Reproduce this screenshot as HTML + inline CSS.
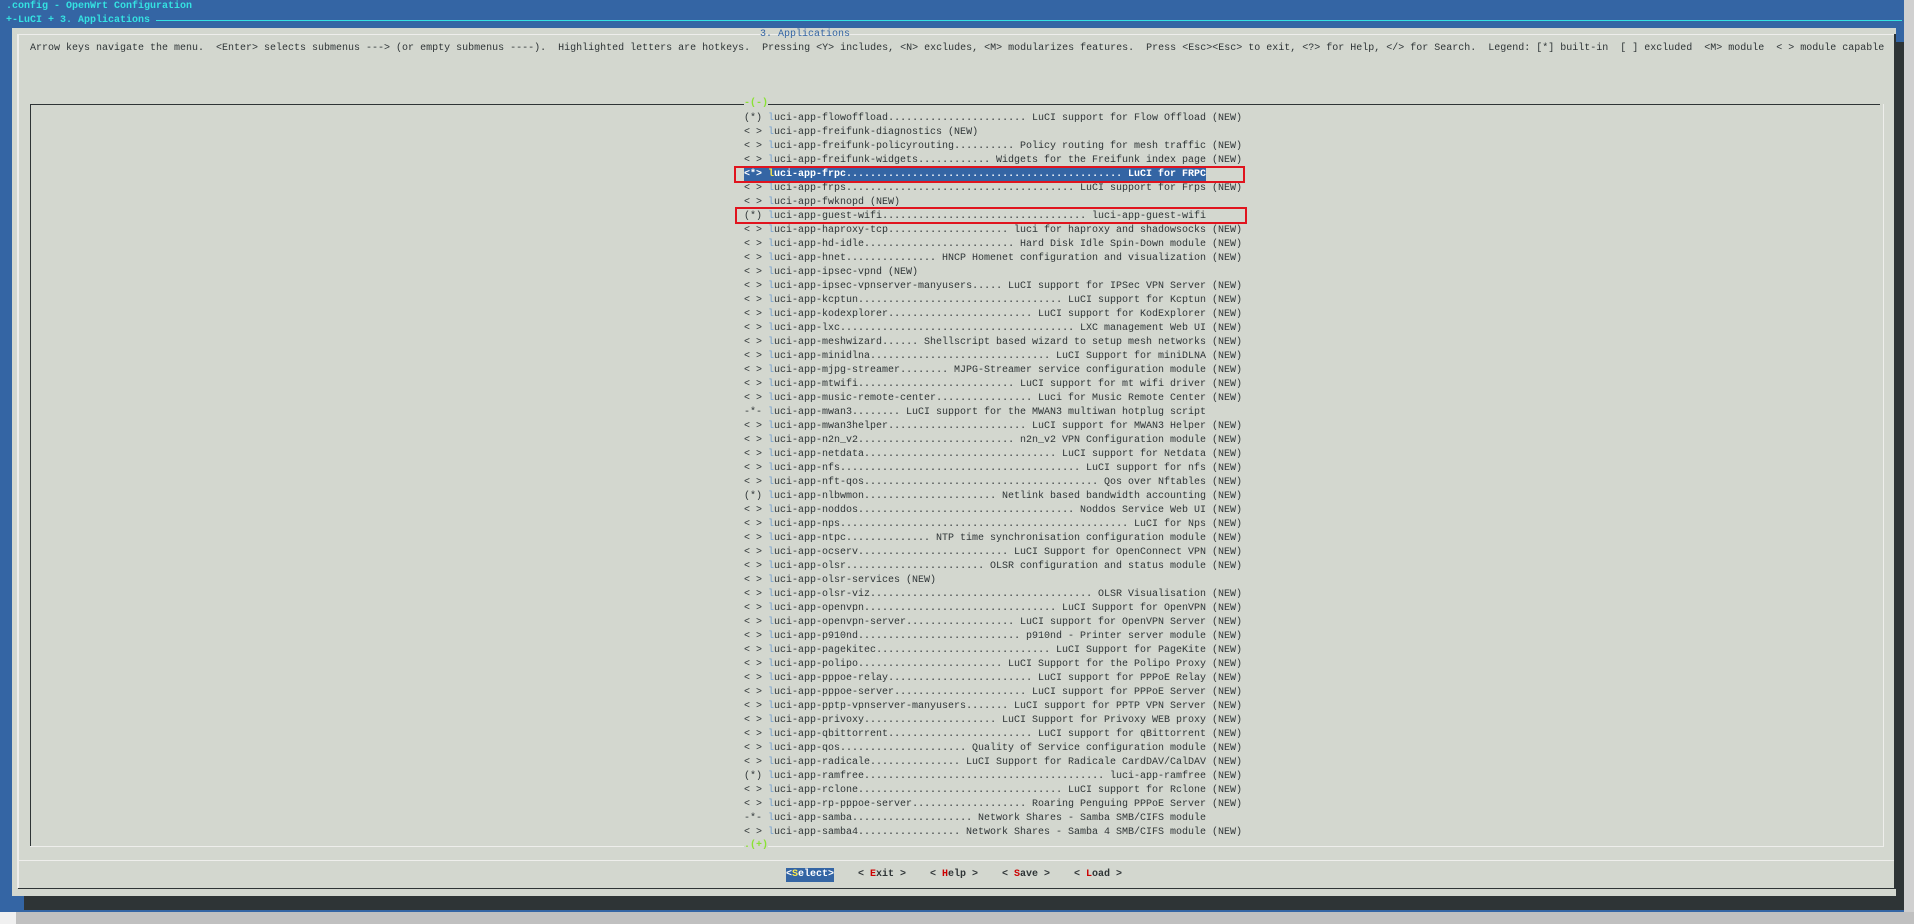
<!DOCTYPE html>
<html><head><meta charset="utf-8"><style>
*{margin:0;padding:0;box-sizing:border-box}
body{width:1914px;height:924px;overflow:hidden;background:#3465a4;position:relative;font-family:"Liberation Mono","Noto Sans CJK SC",monospace;font-size:10px;color:#2e3436}
.a{position:absolute;white-space:pre;line-height:14px}
.cy{color:#34e2e2;font-weight:bold}
#dlg{position:absolute;left:12px;top:28px;width:1884px;height:868px;background:#d3d7cf}
.hl{position:absolute;height:1px;background:#eeeeec}
.dk{position:absolute;background:#2e3436}
.row{position:absolute;left:744px;width:462px;height:14px;display:flex;white-space:pre;line-height:14px;overflow:hidden}
.row .d{flex:1;overflow:hidden}
.row .k{color:#729fcf}
.row.sel{background:#3465a4;color:#fff;font-weight:bold}
.row.sel .k{color:#fce94f}
.new{position:absolute;left:1206px;white-space:pre;line-height:14px}
.box{position:absolute;border:2px solid #e0141e}
.btn{position:absolute;top:868px;white-space:pre;line-height:14px;font-weight:bold}
.r{color:#cc0000}
</style></head><body>
<div class="a cy" style="left:6px;top:0">.config - OpenWrt Configuration</div>
<div class="a cy" style="left:6px;top:14px">+-LuCI + 3. Applications</div>
<div style="position:absolute;left:156px;top:20px;width:1746px;height:1px;background:#34e2e2"></div>
<div class="dk" style="left:1896px;top:42px;width:8px;height:868px"></div>
<div class="dk" style="left:24px;top:896px;width:1880px;height:14px"></div>
<div style="position:absolute;left:0;top:912px;width:1914px;height:12px;background:#c0c0c0"></div>
<div style="position:absolute;left:0;top:912px;width:16px;height:12px;background:#f0f0f0"></div>
<div style="position:absolute;left:1904px;top:0;width:10px;height:912px;background:#d0d0d0"></div>
<div id="dlg"></div>
<div class="hl" style="left:18px;top:34px;width:1878px"></div>
<div style="position:absolute;left:17px;top:34px;width:2px;height:854px;background:#eeeeec"></div>
<div class="dk" style="left:1894px;top:34px;width:2px;height:854px"></div>
<div class="a" style="left:760px;top:28px;color:#3465a4">3. Applications</div>
<div class="a" style="left:30px;top:42px">Arrow keys navigate the menu.  &lt;Enter&gt; selects submenus ---&gt; (or empty submenus ----).  Highlighted letters are hotkeys.  Pressing &lt;Y&gt; includes, &lt;N&gt; excludes, &lt;M&gt; modularizes features.  Press &lt;Esc&gt;&lt;Esc&gt; to exit, &lt;?&gt; for Help, &lt;/&gt; for Search.  Legend: [*] built-in  [ ] excluded  &lt;M&gt; module  &lt; &gt; module capable</div>
<div class="dk" style="left:30px;top:104px;width:1850px;height:1px"></div>
<div class="dk" style="left:30px;top:104px;width:1px;height:742px"></div>
<div class="hl" style="left:30px;top:846px;width:1854px"></div>
<div style="position:absolute;left:1883px;top:104px;width:1px;height:742px;background:#eeeeec"></div>
<div class="a" style="left:744px;top:97px;color:#8ae234;font-weight:bold;background:#d3d7cf">-(-)</div>
<div class="a" style="left:744px;top:839px;color:#8ae234;font-weight:bold;background:#d3d7cf">.(+)</div>
<div class="hl" style="left:18px;top:860px;width:1876px"></div>
<div class="dk" style="left:18px;top:888px;width:1878px;height:1px"></div>

<div class="row" style="top:112px"><span>(*) </span><span class="k">l</span><span>uci-app-flowoffload</span><span class="d">........................................................................</span><span> LuCI support for Flow Offload</span></div><div class="new" style="top:112px"> (NEW)</div>
<div class="row" style="top:126px"><span>&lt; &gt; </span><span class="k">l</span><span>uci-app-freifunk-diagnostics (NEW)</span></div>
<div class="row" style="top:140px"><span>&lt; &gt; </span><span class="k">l</span><span>uci-app-freifunk-policyrouting</span><span class="d">........................................................................</span><span> Policy routing for mesh traffic</span></div><div class="new" style="top:140px"> (NEW)</div>
<div class="row" style="top:154px"><span>&lt; &gt; </span><span class="k">l</span><span>uci-app-freifunk-widgets</span><span class="d">........................................................................</span><span> Widgets for the Freifunk index page</span></div><div class="new" style="top:154px"> (NEW)</div>
<div class="row sel" style="top:168px"><span>&lt;*&gt; </span><span class="k">l</span><span>uci-app-frpc</span><span class="d">........................................................................</span><span> LuCI for FRPC</span></div>
<div class="row" style="top:182px"><span>&lt; &gt; </span><span class="k">l</span><span>uci-app-frps</span><span class="d">........................................................................</span><span> LuCI support for Frps</span></div><div class="new" style="top:182px"> (NEW)</div>
<div class="row" style="top:196px"><span>&lt; &gt; </span><span class="k">l</span><span>uci-app-fwknopd (NEW)</span></div>
<div class="row" style="top:210px"><span>(*) </span><span class="k">l</span><span>uci-app-guest-wifi</span><span class="d">........................................................................</span><span> luci-app-guest-wifi</span></div>
<div class="row" style="top:224px"><span>&lt; &gt; </span><span class="k">l</span><span>uci-app-haproxy-tcp</span><span class="d">........................................................................</span><span> luci for haproxy and shadowsocks</span></div><div class="new" style="top:224px"> (NEW)</div>
<div class="row" style="top:238px"><span>&lt; &gt; </span><span class="k">l</span><span>uci-app-hd-idle</span><span class="d">........................................................................</span><span> Hard Disk Idle Spin-Down module</span></div><div class="new" style="top:238px"> (NEW)</div>
<div class="row" style="top:252px"><span>&lt; &gt; </span><span class="k">l</span><span>uci-app-hnet</span><span class="d">........................................................................</span><span> HNCP Homenet configuration and visualization</span></div><div class="new" style="top:252px"> (NEW)</div>
<div class="row" style="top:266px"><span>&lt; &gt; </span><span class="k">l</span><span>uci-app-ipsec-vpnd (NEW)</span></div>
<div class="row" style="top:280px"><span>&lt; &gt; </span><span class="k">l</span><span>uci-app-ipsec-vpnserver-manyusers</span><span class="d">........................................................................</span><span> LuCI support for IPSec VPN Server</span></div><div class="new" style="top:280px"> (NEW)</div>
<div class="row" style="top:294px"><span>&lt; &gt; </span><span class="k">l</span><span>uci-app-kcptun</span><span class="d">........................................................................</span><span> LuCI support for Kcptun</span></div><div class="new" style="top:294px"> (NEW)</div>
<div class="row" style="top:308px"><span>&lt; &gt; </span><span class="k">l</span><span>uci-app-kodexplorer</span><span class="d">........................................................................</span><span> LuCI support for KodExplorer</span></div><div class="new" style="top:308px"> (NEW)</div>
<div class="row" style="top:322px"><span>&lt; &gt; </span><span class="k">l</span><span>uci-app-lxc</span><span class="d">........................................................................</span><span> LXC management Web UI</span></div><div class="new" style="top:322px"> (NEW)</div>
<div class="row" style="top:336px"><span>&lt; &gt; </span><span class="k">l</span><span>uci-app-meshwizard</span><span class="d">........................................................................</span><span> Shellscript based wizard to setup mesh networks</span></div><div class="new" style="top:336px"> (NEW)</div>
<div class="row" style="top:350px"><span>&lt; &gt; </span><span class="k">l</span><span>uci-app-minidlna</span><span class="d">........................................................................</span><span> LuCI Support for miniDLNA</span></div><div class="new" style="top:350px"> (NEW)</div>
<div class="row" style="top:364px"><span>&lt; &gt; </span><span class="k">l</span><span>uci-app-mjpg-streamer</span><span class="d">........................................................................</span><span> MJPG-Streamer service configuration module</span></div><div class="new" style="top:364px"> (NEW)</div>
<div class="row" style="top:378px"><span>&lt; &gt; </span><span class="k">l</span><span>uci-app-mtwifi</span><span class="d">........................................................................</span><span> LuCI support for mt wifi driver</span></div><div class="new" style="top:378px"> (NEW)</div>
<div class="row" style="top:392px"><span>&lt; &gt; </span><span class="k">l</span><span>uci-app-music-remote-center</span><span class="d">........................................................................</span><span> Luci for Music Remote Center</span></div><div class="new" style="top:392px"> (NEW)</div>
<div class="row" style="top:406px"><span>-*- </span><span class="k">l</span><span>uci-app-mwan3</span><span class="d">........................................................................</span><span> LuCI support for the MWAN3 multiwan hotplug script</span></div>
<div class="row" style="top:420px"><span>&lt; &gt; </span><span class="k">l</span><span>uci-app-mwan3helper</span><span class="d">........................................................................</span><span> LuCI support for MWAN3 Helper</span></div><div class="new" style="top:420px"> (NEW)</div>
<div class="row" style="top:434px"><span>&lt; &gt; </span><span class="k">l</span><span>uci-app-n2n_v2</span><span class="d">........................................................................</span><span> n2n_v2 VPN Configuration module</span></div><div class="new" style="top:434px"> (NEW)</div>
<div class="row" style="top:448px"><span>&lt; &gt; </span><span class="k">l</span><span>uci-app-netdata</span><span class="d">........................................................................</span><span> LuCI support for Netdata</span></div><div class="new" style="top:448px"> (NEW)</div>
<div class="row" style="top:462px"><span>&lt; &gt; </span><span class="k">l</span><span>uci-app-nfs</span><span class="d">........................................................................</span><span> LuCI support for nfs</span></div><div class="new" style="top:462px"> (NEW)</div>
<div class="row" style="top:476px"><span>&lt; &gt; </span><span class="k">l</span><span>uci-app-nft-qos</span><span class="d">........................................................................</span><span> Qos over Nftables</span></div><div class="new" style="top:476px"> (NEW)</div>
<div class="row" style="top:490px"><span>(*) </span><span class="k">l</span><span>uci-app-nlbwmon</span><span class="d">........................................................................</span><span> Netlink based bandwidth accounting</span></div><div class="new" style="top:490px"> (NEW)</div>
<div class="row" style="top:504px"><span>&lt; &gt; </span><span class="k">l</span><span>uci-app-noddos</span><span class="d">........................................................................</span><span> Noddos Service Web UI</span></div><div class="new" style="top:504px"> (NEW)</div>
<div class="row" style="top:518px"><span>&lt; &gt; </span><span class="k">l</span><span>uci-app-nps</span><span class="d">........................................................................</span><span> LuCI for Nps</span></div><div class="new" style="top:518px"> (NEW)</div>
<div class="row" style="top:532px"><span>&lt; &gt; </span><span class="k">l</span><span>uci-app-ntpc</span><span class="d">........................................................................</span><span> NTP time synchronisation configuration module</span></div><div class="new" style="top:532px"> (NEW)</div>
<div class="row" style="top:546px"><span>&lt; &gt; </span><span class="k">l</span><span>uci-app-ocserv</span><span class="d">........................................................................</span><span> LuCI Support for OpenConnect VPN</span></div><div class="new" style="top:546px"> (NEW)</div>
<div class="row" style="top:560px"><span>&lt; &gt; </span><span class="k">l</span><span>uci-app-olsr</span><span class="d">........................................................................</span><span> OLSR configuration and status module</span></div><div class="new" style="top:560px"> (NEW)</div>
<div class="row" style="top:574px"><span>&lt; &gt; </span><span class="k">l</span><span>uci-app-olsr-services (NEW)</span></div>
<div class="row" style="top:588px"><span>&lt; &gt; </span><span class="k">l</span><span>uci-app-olsr-viz</span><span class="d">........................................................................</span><span> OLSR Visualisation</span></div><div class="new" style="top:588px"> (NEW)</div>
<div class="row" style="top:602px"><span>&lt; &gt; </span><span class="k">l</span><span>uci-app-openvpn</span><span class="d">........................................................................</span><span> LuCI Support for OpenVPN</span></div><div class="new" style="top:602px"> (NEW)</div>
<div class="row" style="top:616px"><span>&lt; &gt; </span><span class="k">l</span><span>uci-app-openvpn-server</span><span class="d">........................................................................</span><span> LuCI support for OpenVPN Server</span></div><div class="new" style="top:616px"> (NEW)</div>
<div class="row" style="top:630px"><span>&lt; &gt; </span><span class="k">l</span><span>uci-app-p910nd</span><span class="d">........................................................................</span><span> p910nd - Printer server module</span></div><div class="new" style="top:630px"> (NEW)</div>
<div class="row" style="top:644px"><span>&lt; &gt; </span><span class="k">l</span><span>uci-app-pagekitec</span><span class="d">........................................................................</span><span> LuCI Support for PageKite</span></div><div class="new" style="top:644px"> (NEW)</div>
<div class="row" style="top:658px"><span>&lt; &gt; </span><span class="k">l</span><span>uci-app-polipo</span><span class="d">........................................................................</span><span> LuCI Support for the Polipo Proxy</span></div><div class="new" style="top:658px"> (NEW)</div>
<div class="row" style="top:672px"><span>&lt; &gt; </span><span class="k">l</span><span>uci-app-pppoe-relay</span><span class="d">........................................................................</span><span> LuCI support for PPPoE Relay</span></div><div class="new" style="top:672px"> (NEW)</div>
<div class="row" style="top:686px"><span>&lt; &gt; </span><span class="k">l</span><span>uci-app-pppoe-server</span><span class="d">........................................................................</span><span> LuCI support for PPPoE Server</span></div><div class="new" style="top:686px"> (NEW)</div>
<div class="row" style="top:700px"><span>&lt; &gt; </span><span class="k">l</span><span>uci-app-pptp-vpnserver-manyusers</span><span class="d">........................................................................</span><span> LuCI support for PPTP VPN Server</span></div><div class="new" style="top:700px"> (NEW)</div>
<div class="row" style="top:714px"><span>&lt; &gt; </span><span class="k">l</span><span>uci-app-privoxy</span><span class="d">........................................................................</span><span> LuCI Support for Privoxy WEB proxy</span></div><div class="new" style="top:714px"> (NEW)</div>
<div class="row" style="top:728px"><span>&lt; &gt; </span><span class="k">l</span><span>uci-app-qbittorrent</span><span class="d">........................................................................</span><span> LuCI support for qBittorrent</span></div><div class="new" style="top:728px"> (NEW)</div>
<div class="row" style="top:742px"><span>&lt; &gt; </span><span class="k">l</span><span>uci-app-qos</span><span class="d">........................................................................</span><span> Quality of Service configuration module</span></div><div class="new" style="top:742px"> (NEW)</div>
<div class="row" style="top:756px"><span>&lt; &gt; </span><span class="k">l</span><span>uci-app-radicale</span><span class="d">........................................................................</span><span> LuCI Support for Radicale CardDAV/CalDAV</span></div><div class="new" style="top:756px"> (NEW)</div>
<div class="row" style="top:770px"><span>(*) </span><span class="k">l</span><span>uci-app-ramfree</span><span class="d">........................................................................</span><span> luci-app-ramfree</span></div><div class="new" style="top:770px"> (NEW)</div>
<div class="row" style="top:784px"><span>&lt; &gt; </span><span class="k">l</span><span>uci-app-rclone</span><span class="d">........................................................................</span><span> LuCI support for Rclone</span></div><div class="new" style="top:784px"> (NEW)</div>
<div class="row" style="top:798px"><span>&lt; &gt; </span><span class="k">l</span><span>uci-app-rp-pppoe-server</span><span class="d">........................................................................</span><span> Roaring Penguing PPPoE Server</span></div><div class="new" style="top:798px"> (NEW)</div>
<div class="row" style="top:812px"><span>-*- </span><span class="k">l</span><span>uci-app-samba</span><span class="d">........................................................................</span><span> Network Shares - Samba SMB/CIFS module</span></div>
<div class="row" style="top:826px"><span>&lt; &gt; </span><span class="k">l</span><span>uci-app-samba4</span><span class="d">........................................................................</span><span> Network Shares - Samba 4 SMB/CIFS module</span></div><div class="new" style="top:826px"> (NEW)</div>

<div class="box" style="left:734px;top:166px;width:511px;height:17px"></div>
<div class="box" style="left:735px;top:207px;width:512px;height:17px"></div>

<div class="btn" style="left:786px;background:#3465a4;color:#fff">&lt;<span style="color:#fce94f">S</span>elect&gt;</div>
<div class="btn" style="left:858px">&lt; <span class="r">E</span>xit &gt;</div>
<div class="btn" style="left:930px">&lt; <span class="r">H</span>elp &gt;</div>
<div class="btn" style="left:1002px">&lt; <span class="r">S</span>ave &gt;</div>
<div class="btn" style="left:1074px">&lt; <span class="r">L</span>oad &gt;</div>
</body></html>
